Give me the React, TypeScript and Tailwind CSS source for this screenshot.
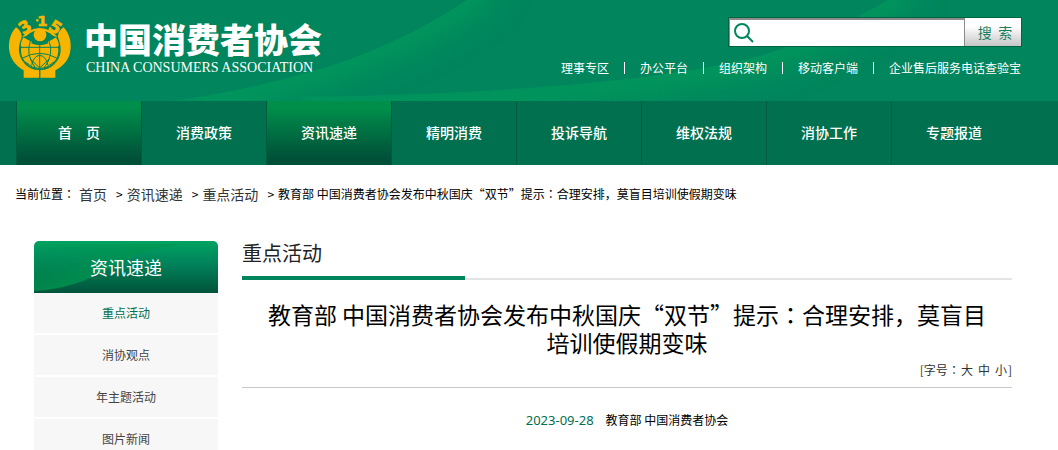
import React from 'react';

const topLinks = ['理事专区', '办公平台', '组织架构', '移动客户端', '企业售后服务电话查验宝'];

const navItems = [
  { label: '首\u3000页', active: true },
  { label: '消费政策', active: false },
  { label: '资讯速递', active: true },
  { label: '精明消费', active: false },
  { label: '投诉导航', active: false },
  { label: '维权法规', active: false },
  { label: '消协工作', active: false },
  { label: '专题报道', active: false },
];

const sideItems = ['重点活动', '消协观点', '年主题活动', '图片新闻'];

// The colon sits in the middle of its full-width box
const Colon = () => <span className="font-['Noto_Sans_CJK_TC',sans-serif]">：</span>;

const Emblem = () => (
  <svg viewBox="27 24 186 192" className="h-16 w-[62px] shrink-0 overflow-visible" aria-hidden="true">
    <g fill="#f8b500">
      <path d="M48 64C29 84 23 114 29 140C35 164 50 180 71 193V215H117V193C84 192 60 166 57 136C56 116 62 104 65 94C66 82 58 70 48 64Z" />
      <path d="M191 64C210 84 216 114 210 140C204 164 189 180 166 193V215H121V193C155 192 179 166 182 136C183 116 177 104 174 94C173 82 181 70 191 64Z" />
      <circle cx="119" cy="134" r="59" />
    </g>
    <circle cx="119" cy="132" r="58" fill="none" stroke="#00855c" strokeWidth="4" />
    <path d="M62 66H176L172 94Q150 116 119 118Q88 116 68 94Z" fill="#00855c" />
    <path d="M66 93Q86 68 119 66Q152 68 173 93L160 90Q142 74 119 73Q96 74 79 90Z" fill="#f8b500" />
    <circle cx="120" cy="87" r="19" fill="#f8b500" />
    <path d="M70 94Q62 108 62 120H91Q92 112 96 107Q82 102 70 94Z" fill="#f8b500" />
    <path d="M168 94Q177 108 177 120H148Q147 112 143 107Q157 102 168 94Z" fill="#f8b500" />
    <g fill="none" stroke="#00855c" strokeWidth="3">
      <path d="M119 106V215" />
      <path d="M60 124H178" />
      <path d="M68 156Q119 128 170 156" />
      <path d="M91 105Q76 145 106 185" />
      <path d="M147 105Q163 145 133 185" />
      <path d="M76 168Q119 208 162 168" />
      <path d="M95 178Q100 150 119 148Q138 150 144 178" />
      <path d="M90 158L119 186L149 158" />
    </g>
    <g fill="#f8b500" stroke="#f8b500" strokeWidth="2" fontSize="50" className="font-['DejaVu_Sans',sans-serif] font-bold">
      <text x="70" y="87" transform="rotate(-33 70 87)">3</text>
      <text x="112" y="60" fontSize="44">1</text>
      <text x="142" y="69" transform="rotate(33 142 69)">5</text>
    </g>
    <circle cx="112" cy="43" r="4" fill="#f8b500" />
  </svg>
);

const HeaderSwoosh = () => (
  <svg viewBox="0 0 1058 101" preserveAspectRatio="none" className="absolute inset-0 h-full w-full" aria-hidden="true">
    <defs>
      <filter id="glow" x="-20%" y="-50%" width="140%" height="200%">
        <feGaussianBlur stdDeviation="16" />
      </filter>
      <clipPath id="under-first">
        <path d="M467 0Q395 48 310 72Q240 92 170 101H1058V0Z" />
      </clipPath>
      <clipPath id="under-second">
        <path d="M888 0Q830 34 760 56Q620 92 300 97V101H1058V0Z" />
      </clipPath>
    </defs>
    <g clipPath="url(#under-first)">
      <path d="M490 -15Q395 48 310 72Q240 92 170 120" fill="none" stroke="#00a05c" strokeOpacity="0.8" strokeWidth="30" filter="url(#glow)" />
    </g>
    <g clipPath="url(#under-second)">
      <path d="M910 -15Q830 34 760 56Q620 92 300 112" fill="none" stroke="#00a05c" strokeOpacity="0.8" strokeWidth="30" filter="url(#glow)" />
    </g>
  </svg>
);

const Header = () => (
  <header className="relative bg-[#00855c] text-white">
    <HeaderSwoosh />
    <div className="relative flex h-[101px] items-start justify-between pr-9 pl-[9px]">
      <a href="#" className="flex pt-[14px]">
        <Emblem />
        <span className="ml-[13px] flex flex-col pt-2">
          <span className="text-[34px] leading-[34px] font-black">中国消费者协会</span>
          <span className="mt-1 ml-0.5 font-['Liberation_Serif',serif] text-[14px] leading-4">CHINA CONSUMERS ASSOCIATION</span>
        </span>
      </a>
      <div className="flex flex-col items-end pt-[17px]">
        <form className="flex h-[30px] w-[294px] border border-[#006443]" onSubmit={(e) => e.preventDefault()}>
          <label className="flex min-w-0 flex-1 items-center border-t-2 border-r border-l border-[#8c8c8c] bg-white pl-1">
            <svg viewBox="0 0 20 20" className="h-5 w-5 shrink-0" fill="none" stroke="#00855c" aria-hidden="true">
              <circle cx="8" cy="8" r="7" strokeWidth="2" />
              <path d="M13 13L19 19" strokeWidth="2" />
            </svg>
            <input type="text" aria-label="搜索" className="min-w-0 flex-1 px-2 text-sm text-black outline-none" />
          </label>
          <button type="submit" className="w-14 bg-gradient-to-b from-white from-30% to-[#c6c6c6] pl-1 text-[14px] leading-5 text-[#1b7f5f]">
            搜&nbsp;&nbsp;索
          </button>
        </form>
        <ul className="mt-[13px] mr-px flex items-center gap-[15px] text-[12px] leading-4">
          {topLinks.map((link, index) => (
            <React.Fragment key={link}>
              {index > 0 && <li aria-hidden="true" className="h-3 w-px bg-white" />}
              <li>
                <a href="#">{link}</a>
              </li>
            </React.Fragment>
          ))}
        </ul>
      </div>
    </div>
  </header>
);

const NavBar = () => (
  <nav className="bg-[#00704f] pl-4">
    <ul className="flex">
      {navItems.map(({ label, active }) => (
        <li key={label} className="w-[125px] border-l border-[#005c3c]">
          <a
            href="#"
            className={`block h-16 text-center text-[14px] leading-[62px] font-medium text-white ${
              active ? 'bg-gradient-to-b from-[#008f4b] from-10% to-[#005038] to-90%' : ''
            }`}
          >
            {label}
          </a>
        </li>
      ))}
    </ul>
  </nav>
);

const Breadcrumb = () => (
  <div className="flex items-center px-[15px] pt-[19px] text-[12px] leading-5 whitespace-pre text-black">
    <span className="mr-1">当前位置<Colon /></span>
    {['首页', '资讯速递', '重点活动'].map((crumb) => (
      <React.Fragment key={crumb}>
        <a href="#" className="text-[14px] text-[#333333]">{crumb}</a>
        <span className="mr-1 ml-[9px]">&gt;</span>
      </React.Fragment>
    ))}
    <span>
      教育部 中国消费者协会发布中秋国庆“双节”提示<Colon />合理安排，莫盲目培训使假期变味
    </span>
  </div>
);

const Sidebar = () => (
  <aside className="w-[184px] shrink-0">
    <h2 className="relative h-[52px] overflow-hidden rounded-t-[5px] bg-gradient-to-b from-[#00a45f] via-[#00855c] via-40% to-[#00543a] text-center text-[18px] leading-[52px] text-white">
      <svg viewBox="0 0 184 52" preserveAspectRatio="none" className="absolute inset-0 h-full w-full" aria-hidden="true">
        <defs>
          <linearGradient id="side-shine" x1="0" y1="0" x2="1" y2="1">
            <stop offset="0" stopColor="#00944f" stopOpacity="0" />
            <stop offset="0.6" stopColor="#00944f" stopOpacity="0.9" />
          </linearGradient>
        </defs>
        <path d="M0 50Q40 48 76 27Q108 7 150 3H0Z" fill="url(#side-shine)" />
      </svg>
      <span className="relative">资讯速递</span>
    </h2>
    <ul className="space-y-0.5 text-center text-[12px]">
      {sideItems.map((item, index) => (
        <li key={item}>
          <a
            href="#"
            className={`block h-10 bg-[#f7f7f7] leading-10 ${index === 0 ? 'text-[#00704f]' : 'text-[#444444]'}`}
          >
            {item}
          </a>
        </li>
      ))}
    </ul>
  </aside>
);

const Article = () => (
  <main className="min-w-0 flex-1 text-black">
    <div className="relative border-b-2 border-[#e4e4e4] pb-[13px]">
      <h2 className="text-[20px] leading-6 text-[#222222]">重点活动</h2>
      <span className="absolute -bottom-0.5 left-0 h-1 w-[223px] bg-[#00855c]" />
    </div>
    <h1 className="mt-5 px-6 text-center text-[23px] leading-7">
      教育部 中国消费者协会发布中秋国庆“双节”提示<Colon />合理安排，莫盲目培训使假期变味
    </h1>
    <div className="flex justify-end gap-[5px] border-b border-[#c8c8c8] pt-1 pb-[7px] text-[12px] leading-5 text-[#333333]">
      <span>[字号<Colon /></span>
      <button type="button" className="-ml-1">大</button>
      <button type="button">中</button>
      <button type="button">小</button>
      <span className="-ml-1">]</span>
    </div>
    <p className="mt-[22px] text-center text-[12px] leading-5">
      <time className="mr-3 font-['Noto_Sans',sans-serif] text-[13px] text-[#00704f]">2023-09-28</time>
      教育部 中国消费者协会
    </p>
  </main>
);

const App = () => {
  return (
    <div className="h-screen overflow-hidden bg-white font-['Noto_Sans_CJK_SC',sans-serif]">
      <Header />
      <NavBar />
      <Breadcrumb />
      <div className="mt-[37px] flex gap-6 pr-[46px] pl-[34px]">
        <Sidebar />
        <Article />
      </div>
    </div>
  );
};

export default App;
